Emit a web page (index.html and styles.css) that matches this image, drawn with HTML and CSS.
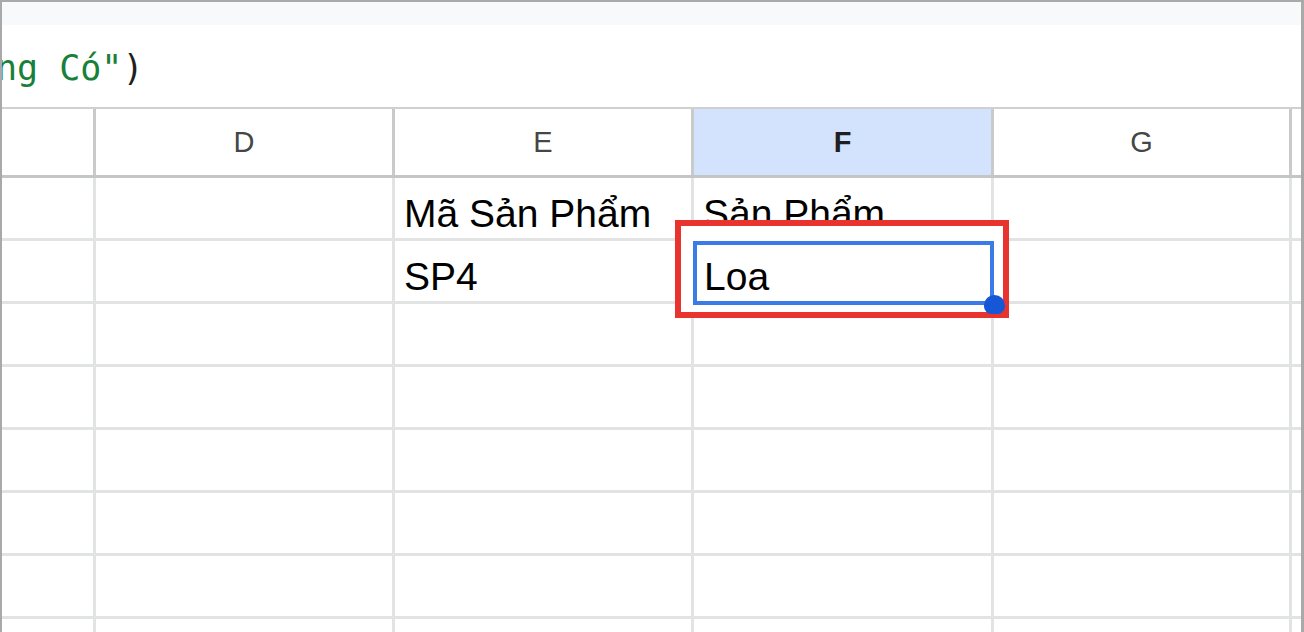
FILE: index.html
```html
<!DOCTYPE html>
<html lang="vi">
<head>
<meta charset="utf-8">
<title>Bảng tính</title>
<link rel="stylesheet" href="styles.css">
</head>
<body>
<div class="window">
  <div class="menu-edge"></div>
  <div class="formula-bar">
    <span class="formula"><span class="str">ng Có"</span><span class="paren">)</span></span>
  </div>
  <div class="sheet">
    <div class="row header">
      <div class="cell first"></div>
      <div class="cell">D</div>
      <div class="cell">E</div>
      <div class="cell active">F</div>
      <div class="cell">G</div>
      <div class="cell"></div>
    </div>
    <div class="row">
      <div class="cell first"></div>
      <div class="cell"></div>
      <div class="cell">Mã Sản Phẩm</div>
      <div class="cell">Sản Phẩm</div>
      <div class="cell"></div>
      <div class="cell"></div>
    </div>
    <div class="row">
      <div class="cell first"></div>
      <div class="cell"></div>
      <div class="cell">SP4</div>
      <div class="cell"></div>
      <div class="cell"></div>
      <div class="cell"></div>
    </div>
    <div class="row"><div class="cell first"></div><div class="cell"></div><div class="cell"></div><div class="cell"></div><div class="cell"></div><div class="cell"></div></div>
    <div class="row"><div class="cell first"></div><div class="cell"></div><div class="cell"></div><div class="cell"></div><div class="cell"></div><div class="cell"></div></div>
    <div class="row"><div class="cell first"></div><div class="cell"></div><div class="cell"></div><div class="cell"></div><div class="cell"></div><div class="cell"></div></div>
    <div class="row"><div class="cell first"></div><div class="cell"></div><div class="cell"></div><div class="cell"></div><div class="cell"></div><div class="cell"></div></div>
    <div class="row"><div class="cell first"></div><div class="cell"></div><div class="cell"></div><div class="cell"></div><div class="cell"></div><div class="cell"></div></div>
    <div class="row"><div class="cell first"></div><div class="cell"></div><div class="cell"></div><div class="cell"></div><div class="cell"></div><div class="cell"></div></div>

    <div class="highlight">
      <div class="selection">
        <span class="value">Loa</span>
        <i class="fill-handle"></i>
      </div>
    </div>
  </div>
</div>
</body>
</html>
```

FILE: styles.css
```css
* {
  box-sizing: border-box;
}

html, body {
  margin: 0;
  padding: 0;
  background: #ffffff;
}

.window {
  width: 1304px;
  height: 632px;
  overflow: hidden;
  border-top: 2px solid #a9a9a9;
  border-left: 2px solid #a9a9a9;
  border-right: 3px solid #a9a9a9;
  background: #ffffff;
  display: flex;
  flex-direction: column;
}

.menu-edge {
  height: 23px;
  flex: none;
  background: #f8f9fa;
}

.formula-bar {
  height: 82px;
  flex: none;
  overflow: hidden;
  padding-top: 26px;
  white-space: nowrap;
}

.formula {
  display: block;
  margin-left: -6px;
  font-family: "DejaVu Sans Mono", "Liberation Mono", monospace;
  font-size: 35px;
  line-height: 35px;
}

.formula .str {
  color: #188038;
}

.formula .paren {
  color: #1f1f1f;
}

.sheet {
  position: relative;
  flex: 1;
  overflow: hidden;
}

.row {
  display: grid;
  grid-template-columns: 91px 299px 299px 300px 298px 1fr;
  height: 63px;
  border-bottom: 3px solid #e2e3e3;
}

.cell {
  border-left: 3px solid #e2e3e3;
  display: flex;
  align-items: flex-end;
  padding: 0 8px 5px 9px;
  font-family: "Liberation Sans", Arial, sans-serif;
  font-size: 39px;
  line-height: 38px;
  color: #000000;
  white-space: nowrap;
  overflow: visible;
}

.cell.first {
  border-left: none;
}

.row.header {
  height: 71px;
  border-top: 2px solid #d0d0d0;
  border-bottom: 3px solid #c4c6c6;
}

.row.header .cell {
  border-left-color: #c9cbcb;
  align-items: center;
  justify-content: center;
  padding: 0;
  font-size: 29px;
  line-height: 29px;
  color: #444746;
}

.row.header .cell.first {
  border-left: none;
}

.row.header .cell.active {
  background: #d3e3fd;
  color: #1f1f1f;
  font-weight: bold;
}

/* annotation frame around the cell being edited */
.highlight {
  position: absolute;
  left: 673px;
  top: 113px;
  width: 334px;
  height: 98px;
  border: 6px solid #e8332f;
  background: #ffffff;
  padding: 15px 9px 7px 12px;
}

.selection {
  position: relative;
  width: 100%;
  height: 100%;
  border: 4px solid #3b7be8;
  padding: 13px 0 0 7px;
}

.value {
  display: block;
  font-family: "Liberation Sans", Arial, sans-serif;
  font-size: 39px;
  line-height: 38px;
  color: #000000;
}

.fill-handle {
  position: absolute;
  right: -15px;
  bottom: -13px;
  width: 21px;
  height: 19px;
  border-radius: 11px 11px 8px 8px;
  background: #1557d6;
}
```
